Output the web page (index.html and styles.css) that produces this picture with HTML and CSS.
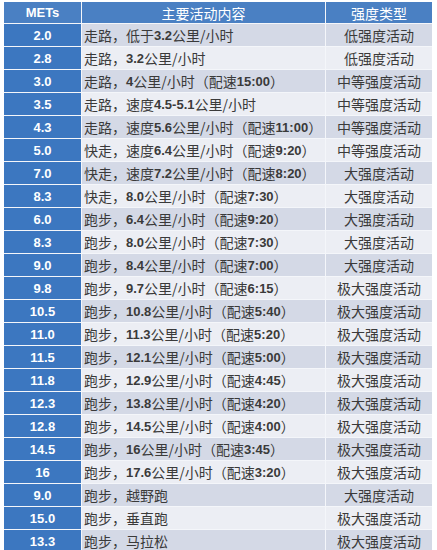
FILE: index.html
```html
<!DOCTYPE html>
<html lang="zh">
<head>
<meta charset="utf-8">
<title>METs</title>
<link rel="stylesheet" href="styles.css">
</head>
<body>
<div class="sheet">
  <div class="grid">
    <div class="hd c1">METs</div><div class="hd c2">主要活动内容</div><div class="hd c3">强度类型</div>

    <div class="m">2.0</div><div class="a d">走路，低于<b>3.2</b>公里/小时</div><div class="t d">低强度活动</div>
    <div class="m">2.8</div><div class="a l">走路，<b>3.2</b>公里/小时</div><div class="t l">低强度活动</div>
    <div class="m">3.0</div><div class="a d">走路，<b>4</b>公里/小时（配速<b>15:00</b>）</div><div class="t d">中等强度活动</div>
    <div class="m">3.5</div><div class="a l">走路，速度<b>4.5-5.1</b>公里/小时</div><div class="t l">中等强度活动</div>
    <div class="m">4.3</div><div class="a d">走路，速度<b>5.6</b>公里/小时（配速<b>11:00</b>）</div><div class="t d">中等强度活动</div>
    <div class="m">5.0</div><div class="a l">快走，速度<b>6.4</b>公里/小时（配速<b>9:20</b>）</div><div class="t l">中等强度活动</div>
    <div class="m">7.0</div><div class="a d">快走，速度<b>7.2</b>公里/小时（配速<b>8:20</b>）</div><div class="t d">大强度活动</div>
    <div class="m">8.3</div><div class="a l">快走，<b>8.0</b>公里/小时（配速<b>7:30</b>）</div><div class="t l">大强度活动</div>
    <div class="m">6.0</div><div class="a d">跑步，<b>6.4</b>公里/小时（配速<b>9:20</b>）</div><div class="t d">大强度活动</div>
    <div class="m">8.3</div><div class="a l">跑步，<b>8.0</b>公里/小时（配速<b>7:30</b>）</div><div class="t l">大强度活动</div>
    <div class="m">9.0</div><div class="a d">跑步，<b>8.4</b>公里/小时（配速<b>7:00</b>）</div><div class="t d">大强度活动</div>
    <div class="m">9.8</div><div class="a l">跑步，<b>9.7</b>公里/小时（配速<b>6:15</b>）</div><div class="t l">极大强度活动</div>
    <div class="m">10.5</div><div class="a d">跑步，<b>10.8</b>公里/小时（配速<b>5:40</b>）</div><div class="t d">极大强度活动</div>
    <div class="m">11.0</div><div class="a l">跑步，<b>11.3</b>公里/小时（配速<b>5:20</b>）</div><div class="t l">极大强度活动</div>
    <div class="m">11.5</div><div class="a d">跑步，<b>12.1</b>公里/小时（配速<b>5:00</b>）</div><div class="t d">极大强度活动</div>
    <div class="m">11.8</div><div class="a l">跑步，<b>12.9</b>公里/小时（配速<b>4:45</b>）</div><div class="t l">极大强度活动</div>
    <div class="m">12.3</div><div class="a d">跑步，<b>13.8</b>公里/小时（配速<b>4:20</b>）</div><div class="t d">极大强度活动</div>
    <div class="m">12.8</div><div class="a l">跑步，<b>14.5</b>公里/小时（配速<b>4:00</b>）</div><div class="t l">极大强度活动</div>
    <div class="m">14.5</div><div class="a d">跑步，<b>16</b>公里/小时（配速<b>3:45</b>）</div><div class="t d">极大强度活动</div>
    <div class="m">16</div><div class="a l">跑步，<b>17.6</b>公里/小时（配速<b>3:20</b>）</div><div class="t l">极大强度活动</div>
    <div class="m">9.0</div><div class="a d">跑步，越野跑</div><div class="t d">大强度活动</div>
    <div class="m">15.0</div><div class="a l">跑步，垂直跑</div><div class="t l">极大强度活动</div>
    <div class="m">13.3</div><div class="a d">跑步，马拉松</div><div class="t d">极大强度活动</div>
  </div>
</div>
</body>
</html>
```

FILE: styles.css
```css
html, body {
  margin: 0;
  padding: 0;
  background: #ffffff;
}
body {
  width: 437px;
  height: 550px;
  overflow: hidden;
}
.sheet {
  padding: 2px 5px 0 4px;
}
.grid {
  display: grid;
  grid-template-columns: 77px 243px 106px;
  grid-auto-rows: 22px;
  grid-template-rows: 21px;
  gap: 1px;
  background: #f4f6fa;
  font-family: "Noto Sans CJK SC", sans-serif;
  font-size: 14px;
  color: #3a3a3a;
}
.grid > div {
  display: flex;
  align-items: center;
  white-space: nowrap;
  overflow: hidden;
}
.hd {
  background: #4a80c3;
  color: #ffffff;
  justify-content: center;
  font-size: 14px;
}
.hd.c1 {
  font-family: "Liberation Sans", sans-serif;
  font-weight: bold;
  font-size: 13px;
}
.m {
  background: #3c77c0;
  color: #ffffff;
  justify-content: center;
  font-family: "Liberation Sans", sans-serif;
  font-weight: bold;
  font-size: 13px;
}
.a {
  padding-left: 2px;
}
.t {
  justify-content: center;
}
.d {
  background: #d4d9e6;
}
.l {
  background: #eceef4;
}
b {
  font-family: "Liberation Sans", sans-serif;
  font-weight: bold;
  font-size: 13px;
}
```
